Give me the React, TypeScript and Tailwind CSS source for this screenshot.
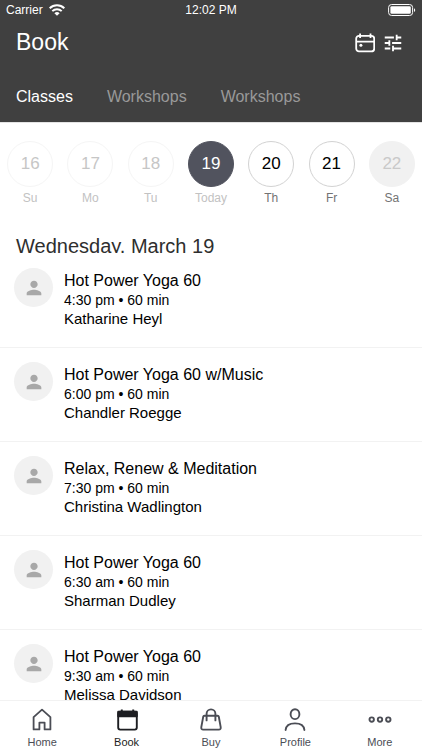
import clsx from 'clsx';
import { MdOutlineTune, MdPerson } from 'react-icons/md';

const tabs = ['Classes', 'Workshops', 'Workshops'];

const days = [
  { date: 16, label: 'Su', state: 'past' },
  { date: 17, label: 'Mo', state: 'past' },
  { date: 18, label: 'Tu', state: 'past' },
  { date: 19, label: 'Today', state: 'selected' },
  { date: 20, label: 'Th', state: 'open' },
  { date: 21, label: 'Fr', state: 'open' },
  { date: 22, label: 'Sa', state: 'closed' },
];

const classes = [
  { title: 'Hot Power Yoga 60', time: '4:30 pm • 60 min', teacher: 'Katharine Heyl' },
  { title: 'Hot Power Yoga 60 w/Music', time: '6:00 pm • 60 min', teacher: 'Chandler Roegge' },
  { title: 'Relax, Renew & Meditation', time: '7:30 pm • 60 min', teacher: 'Christina Wadlington' },
  { title: 'Hot Power Yoga 60', time: '6:30 am • 60 min', teacher: 'Sharman Dudley' },
  { title: 'Hot Power Yoga 60', time: '9:30 am • 60 min', teacher: 'Melissa Davidson' },
];

function WifiIcon() {
  return (
    <svg className="h-3 w-4" viewBox="0 0 16 12" fill="none" stroke="currentColor" strokeWidth="2">
      <path d="M0.7 4.3a10.4 10.4 0 0 1 14.6 0" />
      <path d="M3.3 7.1a6.7 6.7 0 0 1 9.4 0" />
      <path d="M8 11.8 5.4 9.2a3.7 3.7 0 0 1 5.2 0z" fill="currentColor" stroke="none" />
    </svg>
  );
}

function BatteryIcon() {
  return (
    <svg className="h-3 w-7" viewBox="0 0 28 12" fill="none">
      <rect x="0.6" y="0.5" width="24" height="11" rx="3" stroke="currentColor" strokeWidth="1" />
      <rect x="2.4" y="2.2" width="20.4" height="7.6" rx="1.4" fill="currentColor" />
      <path d="M26 4.2c1.6.5 1.6 3.3 0 3.8z" fill="currentColor" />
    </svg>
  );
}

function CalendarIcon() {
  return (
    <svg className="h-5 w-5" viewBox="0 0 20 20" fill="none" stroke="currentColor" strokeWidth="1.8">
      <rect x="1.2" y="2.8" width="18" height="15.6" rx="2.8" />
      <path d="M1.2 8.6h18M5.1 .6v4.4M15.5 .6v4.4" />
      <circle cx="5.9" cy="12.2" r="1.5" fill="currentColor" stroke="none" />
    </svg>
  );
}

function HomeIcon() {
  return (
    <svg className="h-6 w-6" viewBox="0 0 24 24" fill="none" stroke="currentColor" strokeWidth="1.8" strokeLinejoin="round">
      <path d="M3.6 10.2 12 2.6l8.400 7.600v12.200h-5.800v-6.800H9.400v6.800H3.600z" />
    </svg>
  );
}

function BookIcon() {
  return (
    <svg className="h-6 w-6" viewBox="0 0 24 24" fill="none" stroke="currentColor" strokeWidth="1.9">
      <rect x="3.2" y="4.8" width="18.6" height="17.8" rx="2" />
      <path d="M3.2 4.8h18.6v4.4H3.2zM6.8 2.4V5M18.2 2.4V5" fill="currentColor" strokeLinejoin="round" />
    </svg>
  );
}

function BuyIcon() {
  return (
    <svg className="h-6 w-6" viewBox="0 0 24 24" fill="none" stroke="currentColor" strokeWidth="1.9" strokeLinecap="round" strokeLinejoin="round">
      <path d="M4.2 9.8q.2-1 1.2-1h13.2q1 0 1.2 1l1.9 10.400q.3 2.400-1.900 2.400H4.200q-2.200 0-1.900-2.400z" />
      <path d="M7.600 13.400V6.800a4.400 4.400 0 0 1 8.800 0v6.600" />
    </svg>
  );
}

function ProfileIcon() {
  return (
    <svg className="h-6 w-6" viewBox="0 0 24 24" fill="none" stroke="currentColor" strokeWidth="1.9" strokeLinecap="round">
      <ellipse cx="12" cy="7.2" rx="4.4" ry="4.9" />
      <path d="M2.600 23c.4-4.400 3.600-6.600 9.400-6.600s9 2.200 9.400 6.600" />
    </svg>
  );
}

function MoreIcon() {
  return (
    <svg className="h-6 w-6" viewBox="0 0 24 24" fill="none" stroke="currentColor" strokeWidth="1.9">
      <circle cx="3.700" cy="12.600" r="2.200" />
      <circle cx="12" cy="12.600" r="2.200" />
      <circle cx="20.300" cy="12.600" r="2.200" />
    </svg>
  );
}

const navItems = [
  { label: 'Home', Icon: HomeIcon },
  { label: 'Book', Icon: BookIcon },
  { label: 'Buy', Icon: BuyIcon },
  { label: 'Profile', Icon: ProfileIcon },
  { label: 'More', Icon: MoreIcon },
];

function Header() {
  return (
    <header className="bg-[#404040] text-white">
      <div className="grid h-5 grid-cols-3 items-center px-1.5 text-xs">
        <div className="flex items-center gap-1.5">
          Carrier <WifiIcon />
        </div>
        <div className="text-center">12:02 PM</div>
        <div className="flex justify-end">
          <BatteryIcon />
        </div>
      </div>
      <div className="flex h-[45px] items-center justify-between pl-4 pr-[18px]">
        <h1 className="text-[23px]">Book</h1>
        <div className="flex items-center gap-[7px]">
          <button aria-label="Calendar">
            <CalendarIcon />
          </button>
          <button aria-label="Filters">
            <MdOutlineTune className="size-[22px]" />
          </button>
        </div>
      </div>
      <nav className="flex h-[57px] items-center gap-[34px] px-4 pt-1.5">
        {tabs.map((tab, i) => (
          <button key={i} className={clsx('text-base', i === 0 ? 'text-white' : 'text-[#999999]')}>
            {tab}
          </button>
        ))}
      </nav>
    </header>
  );
}

function DayPicker() {
  return (
    <div className="grid grid-cols-7 border-t border-[#e4e4e4] pt-[18px]">
      {days.map(({ date, label, state }) => (
        <button key={date} className="flex flex-col items-center gap-px">
          <span
            className={clsx(
              'flex size-[46px] items-center justify-center rounded-full border text-[17px]',
              state === 'past' && 'border-[#f5f5f5] text-[#c6c6c6]',
              state === 'selected' && 'border-[#51535e] bg-[#51535e] text-white',
              state === 'open' && 'border-[#d2d2d2] text-black',
              state === 'closed' && 'border-[#f1f1f1] bg-[#f1f1f1] text-[#c9c9c9]',
            )}
          >
            {date}
          </span>
          <span
            className={clsx(
              'text-xs leading-5',
              state === 'past' || state === 'selected' ? 'text-[#c2c2c2]' : 'text-[#737373]',
            )}
          >
            {label}
          </span>
        </button>
      ))}
    </div>
  );
}

export default function App() {
  return (
    <div className="flex h-screen flex-col bg-white font-['Liberation_Sans',Arial,sans-serif]">
      <Header />
      <main className="min-h-0 flex-1 overflow-hidden">
        <DayPicker />
        <h2 className="mb-px mt-7 h-[17px] overflow-hidden px-4 text-xl leading-5 text-[#2e2e2e]">
          Wednesday, March 19
        </h2>
        <ul>
          {classes.map(({ title, time, teacher }, i) => (
            <li key={i} className="flex gap-[11px] border-b border-[#f2f2f2] px-3.5 pb-[19px] pt-3.5">
              <span className="flex size-[39px] shrink-0 items-center justify-center rounded-full bg-[#f1f1f1]">
                <MdPerson className="size-[22px] text-[#a8a8a8]" />
              </span>
              <div className="pt-[3px] text-black">
                <h3 className="text-base leading-5">{title}</h3>
                <p className="text-sm leading-[19px]">{time}</p>
                <p className="text-[15px] leading-[18px]">{teacher}</p>
              </div>
            </li>
          ))}
        </ul>
      </main>
      <nav className="grid grid-cols-5 border-t border-[#f2f2f2] bg-white pt-1.5 text-[#4b4d55]">
        {navItems.map(({ label, Icon }) => (
          <a
            key={label}
            href="#"
            className={clsx('flex flex-col items-center gap-[3px]', label === 'Book' && 'text-[#1d1e22]')}
          >
            <Icon />
            <span className="text-[11px] leading-4">{label}</span>
          </a>
        ))}
      </nav>
    </div>
  );
}
